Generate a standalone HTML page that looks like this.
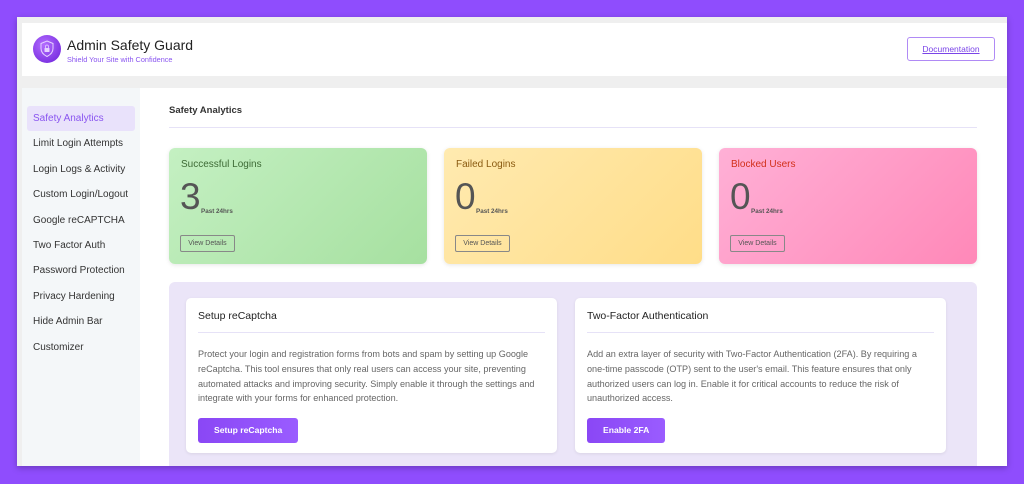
<!DOCTYPE html>
<html><head><style>
*{box-sizing:border-box;margin:0;padding:0}
body{width:1024px;height:484px;background:#8f4dfd;font-family:"Liberation Sans",sans-serif;position:relative;overflow:hidden}
.frame{position:absolute;left:17px;top:17px;width:990px;height:449px;background:#efefef;overflow:hidden;box-shadow:0 2px 6px rgba(0,0,0,.25)}
.header{position:absolute;left:5px;top:6px;width:985px;height:53px;background:#fff}
.logo{position:absolute;left:11px;top:12px;width:28px;height:28px;border-radius:50%;background:radial-gradient(circle at 40% 35%,#b36cff,#6a1fd8)}
.title{position:absolute;left:45px;top:14px;font-size:14px;color:#222}
.sub{position:absolute;left:45px;top:32px;font-size:7.3px;color:#8a55f0}
.doc{position:absolute;left:885px;top:14px;width:88px;height:24px;border:1px solid #b08af5;border-radius:3px;font-size:8.5px;color:#7a44e8;text-decoration:underline;text-align:center;line-height:22px}
.side{position:absolute;left:5px;top:71px;width:118px;height:380px;background:#f4f7f9}
.side div{font-size:10px;color:#333;height:25.4px;line-height:25px;padding-left:6px;margin:0 5px;white-space:nowrap}
.side .act{background:#e9e2fb;color:#8a55f0;border-radius:3px}
.main{position:absolute;left:123px;top:71px;width:867px;height:380px;background:#fff}
h2{position:absolute;left:29px;top:17px;font-size:9.5px;color:#333;font-weight:bold}
.hr{position:absolute;left:29px;top:39px;width:808px;height:1px;background:#e6e2f7}
.card{position:absolute;top:60px;width:258px;height:116px;border-radius:6px;box-shadow:0 1px 4px rgba(0,0,0,.1)}
.card h3{position:absolute;left:12px;top:11px;font-size:10px;font-weight:normal}
.card .n{position:absolute;left:11px;top:28px;font-size:37px;color:#555}
.card .p{position:absolute;left:32px;top:60px;font-size:6.3px;color:#555;font-weight:bold}
.card .b{position:absolute;left:11px;top:87px;width:55px;height:17px;border:1px solid #888;border-radius:2px;font-size:7px;color:#555;text-align:center;line-height:15px}
.lav{position:absolute;left:29px;top:194px;width:808px;height:200px;background:#ebe5f8;border-radius:6px}
.ic{position:absolute;top:16px;width:371px;height:155px;background:#fff;border-radius:5px;box-shadow:0 1px 3px rgba(0,0,0,.08)}
.ic h4{position:absolute;left:12px;top:12px;font-size:10.5px;font-weight:normal;color:#222}
.ic .l{position:absolute;left:12px;top:34px;width:347px;height:1px;background:#e6e2f7}
.ic p{position:absolute;left:12px;top:49px;width:347px;font-size:9.1px;line-height:14.8px;color:#666}
.ic .btn{position:absolute;left:12px;top:120px;height:25px;padding:0 16px;background:linear-gradient(90deg,#8a47f5,#9a5cff);color:#fff;font-size:8.6px;font-weight:bold;line-height:25px;border-radius:3px}
</style></head><body>
<div class="frame">
<div class="header"><div class="logo"><svg width="28" height="28" viewBox="0 0 28 28"><path d="M14 6l6 2.5v5c0 4-3 6.5-6 8-3-1.5-6-4-6-8v-5z" fill="none" stroke="#e6d2ff" stroke-width="1"/><rect x="11.5" y="13" width="5" height="4" rx=".5" fill="#e6d2ff"/><path d="M12.5 13v-1.5a1.5 1.5 0 0 1 3 0V13" fill="none" stroke="#e6d2ff" stroke-width=".8"/></svg></div><div class="title">Admin Safety Guard</div><div class="sub">Shield Your Site with Confidence</div><div class="doc">Documentation</div></div>
<div class="side" style="padding-top:18px">
<div class="act">Safety Analytics</div><div>Limit Login Attempts</div><div>Login Logs &amp; Activity</div><div>Custom Login/Logout</div><div>Google reCAPTCHA</div><div>Two Factor Auth</div><div>Password Protection</div><div>Privacy Hardening</div><div>Hide Admin Bar</div><div>Customizer</div>
</div>
<div class="main">
<h2>Safety Analytics</h2><div class="hr"></div>
<div class="card" style="left:29px;background:linear-gradient(135deg,#c4f0c2,#a6e0a0)"><h3 style="color:#3d6a35">Successful Logins</h3><div class="n">3</div><div class="p">Past 24hrs</div><div class="b">View Details</div></div>
<div class="card" style="left:304px;background:linear-gradient(135deg,#ffeab0,#ffdd88)"><h3 style="color:#8a5a10">Failed Logins</h3><div class="n">0</div><div class="p">Past 24hrs</div><div class="b">View Details</div></div>
<div class="card" style="left:579px;background:linear-gradient(135deg,#ffb0d6,#ff88b8)"><h3 style="color:#d2301a">Blocked Users</h3><div class="n">0</div><div class="p">Past 24hrs</div><div class="b">View Details</div></div>
<div class="lav">
<div class="ic" style="left:17px"><h4>Setup reCaptcha</h4><div class="l"></div><p>Protect your login and registration forms from bots and spam by setting up Google reCaptcha. This tool ensures that only real users can access your site, preventing automated attacks and improving security. Simply enable it through the settings and integrate with your forms for enhanced protection.</p><div class="btn">Setup reCaptcha</div></div>
<div class="ic" style="left:406px"><h4>Two-Factor Authentication</h4><div class="l"></div><p style="width:343px">Add an extra layer of security with Two-Factor Authentication (2FA). By requiring a one-time passcode (OTP) sent to the user's email. This feature ensures that only authorized users can log in. Enable it for critical accounts to reduce the risk of unauthorized access.</p><div class="btn">Enable 2FA</div></div>
</div>
</div>
</div>
</body></html>
